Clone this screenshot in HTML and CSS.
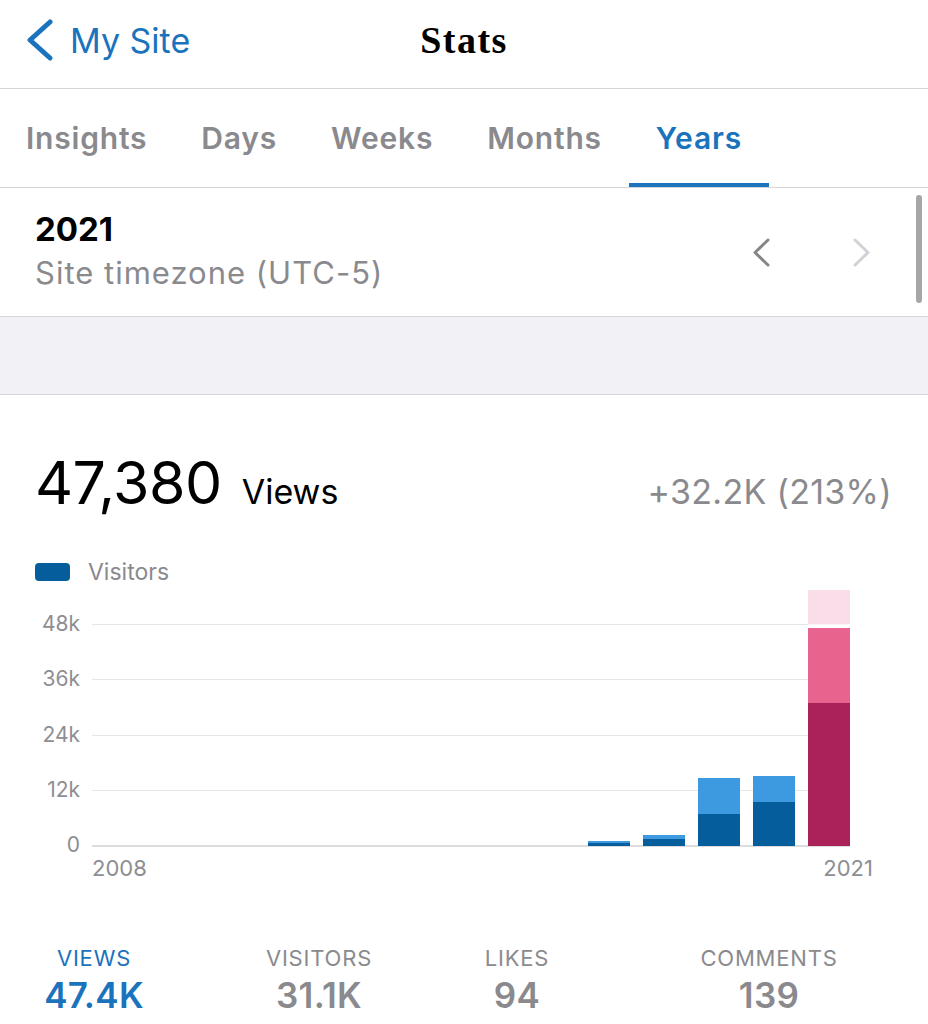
FILE: index.html
```html
<!DOCTYPE html>
<html lang="en">
<head>
<meta charset="utf-8">
<title>Stats</title>
<link rel="stylesheet" href="styles.css">
</head>
<body>
<div class="screen">
  <header class="navbar">
    <a class="back">
      <svg class="back-icon" width="26" height="42" viewBox="0 0 26 42"><polyline points="23,3 3,21 23,39" fill="none" stroke="currentColor" stroke-width="5" stroke-linecap="round" stroke-linejoin="round"/></svg>
      <span>My Site</span>
    </a>
    <h1 class="title">Stats</h1>
    <span></span>
  </header>

  <nav class="tabs">
    <span class="tab">Insights</span>
    <span class="tab">Days</span>
    <span class="tab">Weeks</span>
    <span class="tab">Months</span>
    <span class="tab active">Years</span>
  </nav>

  <section class="period">
    <div class="period-text">
      <div class="year">2021</div>
      <div class="tz">Site timezone (UTC-5)</div>
    </div>
    <div class="period-arrows">
      <svg class="arrow prev" width="17" height="29" viewBox="0 0 17 29"><polyline points="15,2 2,14.5 15,27" fill="none" stroke="currentColor" stroke-width="3" stroke-linecap="round" stroke-linejoin="round"/></svg>
      <svg class="arrow next" width="17" height="29" viewBox="0 0 17 29"><polyline points="2,2 15,14.5 2,27" fill="none" stroke="currentColor" stroke-width="3" stroke-linecap="round" stroke-linejoin="round"/></svg>
    </div>
    <div class="scrollbar"></div>
  </section>

  <div class="band"></div>

  <section class="overview">
    <div class="headline">
      <span class="count">47,380</span>
      <span class="unit">Views</span>
      <span class="delta">+32.2K (213%)</span>
    </div>

    <div class="legend"><span class="swatch"></span><span>Visitors</span></div>

    <div class="chart">
      <div class="ylabels">
        <span>48k</span><span>36k</span><span>24k</span><span>12k</span><span>0</span>
      </div>
      <div class="plot">
        <div class="grid">
          <div class="gline"></div><div class="gline"></div><div class="gline"></div><div class="gline"></div><div class="gline base"></div>
        </div>
        <div class="bars">
          <div class="bar"></div>
          <div class="bar"></div>
          <div class="bar"></div>
          <div class="bar"></div>
          <div class="bar"></div>
          <div class="bar"></div>
          <div class="bar"></div>
          <div class="bar"></div>
          <div class="bar"></div>
          <div class="bar"><div class="seg views" style="height:2px"></div><div class="seg visitors" style="height:3px"></div></div>
          <div class="bar"><div class="seg views" style="height:4px"></div><div class="seg visitors" style="height:7px"></div></div>
          <div class="bar"><div class="seg views" style="height:36px"></div><div class="seg visitors" style="height:32px"></div></div>
          <div class="bar"><div class="seg views" style="height:26px"></div><div class="seg visitors" style="height:44px"></div></div>
          <div class="bar selected"><div class="seg highlight"></div><div class="seg views" style="height:75px"></div><div class="seg visitors" style="height:143px"></div></div>
        </div>
      </div>
    </div>
    <div class="xlabels"><span>2008</span><span>2021</span></div>
  </section>

  <section class="totals">
    <div class="total active"><div class="t-label">VIEWS</div><div class="t-value">47.4K</div></div>
    <div class="total"><div class="t-label">VISITORS</div><div class="t-value">31.1K</div></div>
    <div class="total"><div class="t-label">LIKES</div><div class="t-value">94</div></div>
    <div class="total last"><div class="t-label">COMMENTS</div><div class="t-value">139</div></div>
  </section>
</div>
</body>
</html>
```

FILE: styles.css
```css
* { box-sizing: border-box; }

body {
  margin: 0;
  background: #ffffff;
  font-family: Inter, "Liberation Sans", sans-serif;
  color: #000;
  overflow: hidden;
}

.screen {
  width: 928px;
  position: relative;
}

/* Navigation bar */
.navbar {
  height: 89px;
  display: grid;
  grid-template-columns: 1fr auto 1fr;
  align-items: center;
  border-bottom: 1px solid #d6d6da;
}

.back {
  display: flex;
  align-items: center;
  gap: 17px;
  padding-left: 27px;
  color: #1b73bd;
  font-size: 34px;
  font-weight: 400;
  text-decoration: none;
}

.back-icon { display: block; margin-top: -8px; }
.back span { margin-top: -8px; }

.title {
  margin: -8px 0 0;
  font-family: "Liberation Serif", "DejaVu Serif", serif;
  font-weight: 700;
  font-size: 38px;
  letter-spacing: 1.5px;
}

/* Tabs */
.tabs {
  display: flex;
  height: 99px;
  border-bottom: 1px solid #d6d6da;
}

.tab {
  display: flex;
  align-items: center;
  padding: 0 27px;
  font-size: 30px;
  font-weight: 600;
  letter-spacing: 0.8px;
  color: #8a8a8e;
}

.tab:first-child { padding-left: 26px; }

.tab.active {
  color: #1b73bd;
  box-shadow: inset 0 -4px 0 #1b73bd;
}

/* Period row */
.period {
  height: 129px;
  display: flex;
  align-items: center;
  padding: 0 58px 0 35px;
  border-bottom: 1px solid #d6d6da;
}

.period-text { flex: 1; }

.year {
  font-size: 33px;
  font-weight: 700;
  line-height: 40px;
}

.tz {
  font-size: 31px;
  letter-spacing: 1px;
  color: #8a8a8e;
  line-height: 46px;
  margin-top: 1px;
}

.period-arrows {
  display: flex;
  gap: 83px;
}

.arrow { display: block; }
.arrow.prev { color: #86868a; }
.arrow.next { color: #d2d2d6; }

.scrollbar {
  position: absolute;
  right: 6px;
  top: 195px;
  width: 6px;
  height: 108px;
  border-radius: 3px;
  background: #a6a6a8;
}

.band {
  height: 78px;
  background: #f2f2f6;
  border-bottom: 1px solid #d6d6da;
}

/* Overview */
.overview {
  padding: 52px 36px 0 35px;
}

.headline {
  display: flex;
  align-items: baseline;
}

.count {
  font-size: 59px;
  font-weight: 400;
  letter-spacing: -0.5px;
}

.unit {
  font-size: 34px;
  margin-left: 20px;
}

.delta {
  margin-left: auto;
  font-size: 34px;
  letter-spacing: 0.3px;
  color: #8a8a8e;
}

.legend {
  display: flex;
  align-items: center;
  gap: 18px;
  margin-top: 40px;
  font-size: 23px;
  color: #8a8a8e;
}

.swatch {
  width: 35px;
  height: 18px;
  border-radius: 4px;
  background: #055d9c;
}

/* Chart */
.chart {
  display: grid;
  grid-template-columns: 45px 758px;
  column-gap: 12px;
  margin-top: 4px;
}

.ylabels {
  display: flex;
  flex-direction: column;
  align-items: flex-end;
  height: 258px;
  padding-top: 22px;
  font-size: 21px;
  color: #8e8e92;
}

.ylabels span {
  flex-shrink: 0;
  height: 55.33px;
  line-height: 24px;
}

.plot {
  display: grid;
  height: 258px;
}

.grid, .bars { grid-area: 1 / 1; }

.grid {
  padding-top: 34px;
}

.gline {
  height: 55.33px;
  border-top: 1px solid #e6e6e8;
}

.gline.base {
  height: 2px;
  border-top: 2px solid #dcdcdf;
}

.bars {
  display: flex;
  justify-content: flex-end;
  align-items: flex-end;
  gap: 13px;
  padding-bottom: 2px;
}

.bar {
  width: 42px;
  display: flex;
  flex-direction: column;
}

.bar.selected { height: 256px; }

.seg.views { background: #3d9ae1; }
.seg.visitors { background: #055d9c; }

.bar.selected .highlight {
  flex: 1;
  background: linear-gradient(#f9dee9 0, #f9dee9 34px, #fdf4f7 34px);
  border-bottom: 3px solid #fff;
}
.bar.selected .views { background: #e8648f; }
.bar.selected .visitors { background: #aa2259; }

.xlabels {
  display: flex;
  justify-content: space-between;
  margin-left: 57px;
  width: 781px;
  margin-top: 7px;
  font-size: 22px;
  color: #8e8e92;
}

/* Totals */
.totals {
  display: grid;
  grid-template-columns: 188px 262px 134px 340px;
  margin-top: 64px;
  text-align: center;
}

.total.last { padding-left: 30px; }

.t-label {
  font-size: 22px;
  color: #8a8a8e;
  letter-spacing: 0.8px;
  line-height: 26px;
}

.t-value {
  font-size: 35px;
  font-weight: 600;
  letter-spacing: 0.3px;
  color: #8a8a8e;
  line-height: 42px;
  margin-top: 3px;
}

.total.active .t-label,
.total.active .t-value { color: #1b73bd; }
```
